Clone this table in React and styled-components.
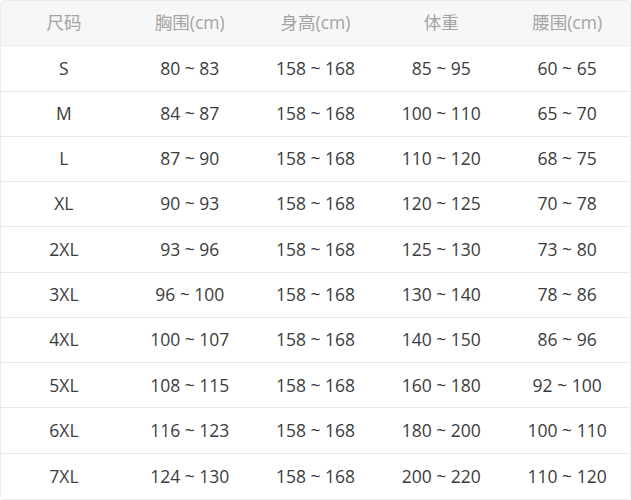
import React from 'react'
import styled, { createGlobalStyle } from 'styled-components'

const GlobalStyle = createGlobalStyle`
  html, body {
    margin: 0;
    padding: 0;
    background: #ffffff;
  }
`

// 表全体: 11行を等分したグリッド
const Table = styled.div`
  width: 631px;
  height: 500px;
  box-sizing: border-box;
  border: 1.5px solid #ececec;
  border-radius: 4px;
  overflow: hidden;
  font-family: "Open Sans", "Noto Sans CJK SC", sans-serif;
  display: grid;
  grid-template-rows: repeat(11, 1fr);
`

const Row = styled.div`
  display: grid;
  grid-template-columns: repeat(5, 1fr);
  align-items: center;
  background: ${p => (p.$head ? '#f7f7f7' : '#ffffff')};
  color: ${p => (p.$head ? '#a3a3a3' : '#3c3c3c')};
  border-bottom: ${p => (p.$last ? 'none' : '1.5px solid #e9e9e9')};
`

const Cell = styled.div`
  text-align: center;
  font-size: 17.5px;
  line-height: 1;
`

const head = ['尺码', '胸围(cm)', '身高(cm)', '体重', '腰围(cm)']

const rows = [
  ['S', '80 ~ 83', '158 ~ 168', '85 ~ 95', '60 ~ 65'],
  ['M', '84 ~ 87', '158 ~ 168', '100 ~ 110', '65 ~ 70'],
  ['L', '87 ~ 90', '158 ~ 168', '110 ~ 120', '68 ~ 75'],
  ['XL', '90 ~ 93', '158 ~ 168', '120 ~ 125', '70 ~ 78'],
  ['2XL', '93 ~ 96', '158 ~ 168', '125 ~ 130', '73 ~ 80'],
  ['3XL', '96 ~ 100', '158 ~ 168', '130 ~ 140', '78 ~ 86'],
  ['4XL', '100 ~ 107', '158 ~ 168', '140 ~ 150', '86 ~ 96'],
  ['5XL', '108 ~ 115', '158 ~ 168', '160 ~ 180', '92 ~ 100'],
  ['6XL', '116 ~ 123', '158 ~ 168', '180 ~ 200', '100 ~ 110'],
  ['7XL', '124 ~ 130', '158 ~ 168', '200 ~ 220', '110 ~ 120'],
]

function App() {
  return (
    <>
      <GlobalStyle />
      <Table>
        <Row $head>
          {head.map(h => (
            <Cell key={h}>{h}</Cell>
          ))}
        </Row>
        {rows.map((r, i) => (
          <Row key={r[0]} $last={i === rows.length - 1}>
            {r.map((c, j) => (
              <Cell key={j}>{c}</Cell>
            ))}
          </Row>
        ))}
      </Table>
    </>
  )
}

export default App
